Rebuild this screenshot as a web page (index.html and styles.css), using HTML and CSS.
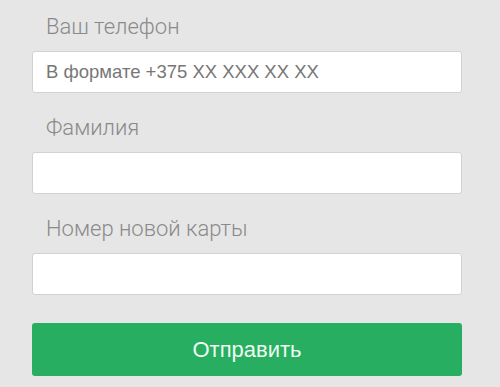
FILE: index.html
```html
<!DOCTYPE html>
<html lang="ru">
<head>
<meta charset="utf-8">
<title>Форма</title>
<link rel="stylesheet" href="styles.css">
</head>
<body>
<form class="form">
  <div class="field">
    <label class="label" for="phone">Ваш телефон</label>
    <input class="input" id="phone" type="text" placeholder="В формате +375 XX XXX XX XX">
  </div>
  <div class="field">
    <label class="label" for="surname">Фамилия</label>
    <input class="input" id="surname" type="text">
  </div>
  <div class="field">
    <label class="label" for="card">Номер новой карты</label>
    <input class="input" id="card" type="text">
  </div>
  <button class="submit" type="button">Отправить</button>
</form>
</body>
</html>
```

FILE: styles.css
```css
html, body {
  margin: 0;
  padding: 0;
  background: #e6e6e6;
}
.form {
  width: 430px;
  padding: 14px 0 0 32px;
  display: flex;
  flex-direction: column;
}
.field {
  display: flex;
  flex-direction: column;
  margin-bottom: 22px;
}
.field:last-of-type {
  margin-bottom: 28px;
}
.label {
  font-family: Roboto, "Liberation Sans", sans-serif;
  font-weight: 300;
  font-size: 22px;
  line-height: 26px;
  color: #8a8a8a;
  padding-left: 14px;
  margin-bottom: 11px;
}
.input {
  box-sizing: border-box;
  height: 42px;
  width: 100%;
  margin: 0;
  border: 1px solid #d2d2d2;
  border-radius: 3px;
  background: #fff;
  padding: 0 13px;
  font-family: "Liberation Sans", Arial, sans-serif;
  font-size: 18.5px;
  color: #555;
  outline: none;
}
.input::placeholder {
  font-family: "Liberation Sans", Arial, sans-serif;
  color: #777;
  opacity: 1;
}
.submit {
  box-sizing: border-box;
  height: 53px;
  width: 100%;
  margin: 0;
  border: none;
  border-radius: 3px;
  background: #27ae60;
  color: #eefbf1;
  font-family: "Liberation Sans", Arial, sans-serif;
  font-size: 22px;
  cursor: pointer;
}
```
